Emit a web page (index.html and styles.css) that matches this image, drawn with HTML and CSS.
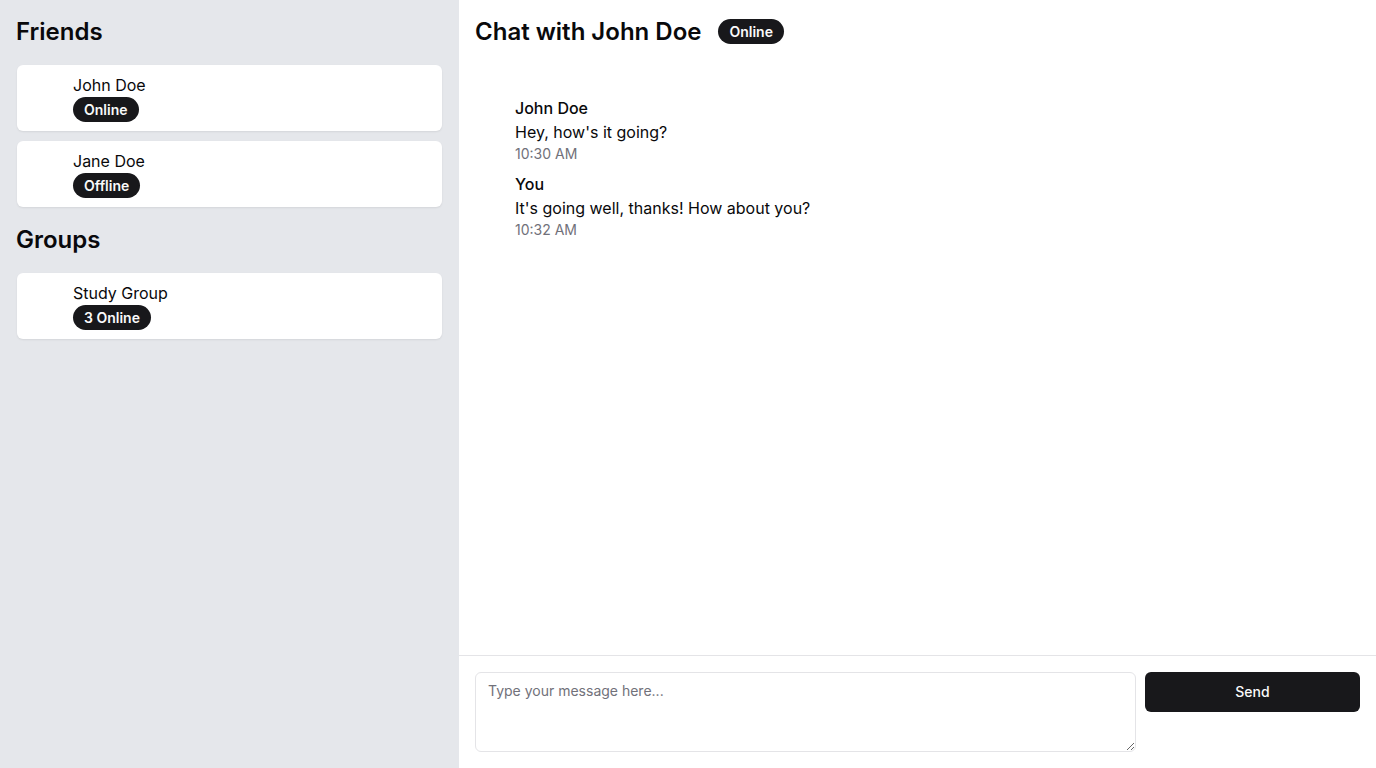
FILE: index.html
```html
<!DOCTYPE html>
<html>
<head>
<meta charset="utf-8">
<link rel="stylesheet" href="styles.css">
</head>
<body>
<div class="app">
  <aside class="sidebar">
    <h2 class="section-title">Friends</h2>
    <div class="list">
      <div class="card">
        <div class="avatar"></div>
        <div class="card-info">
          <div class="card-name">John Doe</div>
          <span class="badge">Online</span>
        </div>
      </div>
      <div class="card">
        <div class="avatar"></div>
        <div class="card-info">
          <div class="card-name">Jane Doe</div>
          <span class="badge">Offline</span>
        </div>
      </div>
    </div>
    <h2 class="section-title groups">Groups</h2>
    <div class="list">
      <div class="card">
        <div class="avatar"></div>
        <div class="card-info">
          <div class="card-name">Study Group</div>
          <span class="badge">3 Online</span>
        </div>
      </div>
    </div>
  </aside>
  <main class="chat">
    <header class="chat-header">
      <h1 class="chat-title">Chat with John Doe</h1>
      <span class="badge">Online</span>
    </header>
    <section class="messages">
      <div class="message">
        <div class="avatar"></div>
        <div class="message-body">
          <div class="sender">John Doe</div>
          <div class="text">Hey, how's it going?</div>
          <div class="time">10:30 AM</div>
        </div>
      </div>
      <div class="message">
        <div class="avatar"></div>
        <div class="message-body">
          <div class="sender">You</div>
          <div class="text">It's going well, thanks! How about you?</div>
          <div class="time">10:32 AM</div>
        </div>
      </div>
    </section>
    <footer class="composer">
      <textarea class="input" placeholder="Type your message here..."></textarea>
      <button class="send">Send</button>
    </footer>
  </main>
</div>
</body>
</html>
```

FILE: styles.css
```css
* { box-sizing: border-box; }
html, body { margin: 0; padding: 0; height: 100%; }
body {
  font-family: Inter, "Liberation Sans", sans-serif;
  color: #09090b;
  background: #ffffff;
}
.app {
  display: flex;
  height: 768px;
}
.sidebar {
  width: 459px;
  flex-shrink: 0;
  background: #e5e7eb;
  padding: 16px;
}
.section-title {
  margin: 0 0 17px;
  font-size: 24px;
  line-height: 32px;
  font-weight: 600;
}
.section-title.groups { margin-top: 17px; }
.list {
  display: flex;
  flex-direction: column;
  gap: 10px;
}
.card {
  display: flex;
  background: #ffffff;
  border-radius: 6px;
  padding: 8px 16px 9px 16px;
  box-shadow: 0 1px 2px rgba(0,0,0,0.08);
  margin: 0 1px;
  min-height: 66px;
}
.avatar {
  width: 40px;
  flex-shrink: 0;
}
.card-info {
  display: flex;
  flex-direction: column;
  align-items: flex-start;
}
.card-name {
  font-size: 16px;
  line-height: 24px;
}
.badge {
  display: inline-block;
  background: #18181b;
  color: #fafafa;
  font-size: 14px;
  font-weight: 600;
  line-height: 20px;
  padding: 3px 11px 2px;
  border-radius: 999px;
}
.chat {
  flex: 1;
  display: flex;
  flex-direction: column;
  min-width: 0;
}
.chat-header {
  display: flex;
  align-items: flex-start;
  gap: 17px;
  padding: 16px 16px 0;
  height: 64px;
}
.chat-header .badge { margin-top: 3px; }
.chat-title {
  margin: 0;
  font-size: 24px;
  line-height: 32px;
  font-weight: 600;
}
.messages {
  flex: 1;
  padding: 32px 16px 16px;
  display: flex;
  flex-direction: column;
  gap: 8px;
}
.message {
  display: flex;
}
.sender {
  font-size: 16px;
  line-height: 24px;
  font-weight: 500;
}
.text {
  font-size: 16px;
  line-height: 24px;
}
.time {
  font-size: 14px;
  line-height: 20px;
  color: #71717a;
}
.composer {
  border-top: 1px solid #e4e4e7;
  padding: 16px;
  display: flex;
  gap: 9px;
  align-items: flex-start;
}
.input {
  flex: 1;
  height: 80px;
  border: 1px solid #e4e4e7;
  border-radius: 6px;
  padding: 8px 12px;
  font-family: Inter, "Liberation Sans", sans-serif;
  font-size: 14px;
  line-height: 20px;
  color: #09090b;
  resize: vertical;
  background: #ffffff;
}
.input::placeholder { color: #71717a; }
.send {
  width: 215px;
  height: 40px;
  border: none;
  border-radius: 6px;
  background: #18181b;
  color: #fafafa;
  font-family: Inter, "Liberation Sans", sans-serif;
  font-size: 14px;
  font-weight: 500;
  line-height: 20px;
  padding: 0 16px 1px;
}
```
